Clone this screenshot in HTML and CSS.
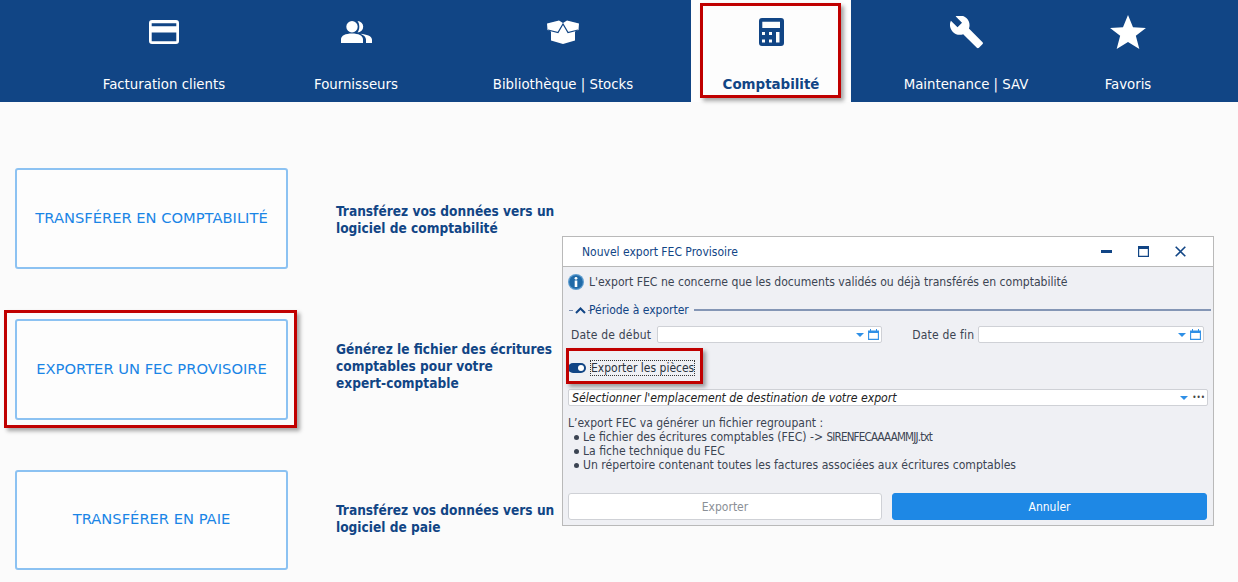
FILE: index.html
```html
<!DOCTYPE html>
<html lang="fr">
<head>
<meta charset="utf-8">
<title>Comptabilité</title>
<link rel="stylesheet" href="styles.css">
</head>
<body>
<nav class="nav">
  <a class="tab"><span class="tab-icon"><svg width="30" height="24" viewBox="0 0 30 24"><path fill="#fff" fill-rule="evenodd" d="M3 0h24a3 3 0 0 1 3 3v18a3 3 0 0 1-3 3H3a3 3 0 0 1-3-3V3a3 3 0 0 1 3-3zM2.700 3.300v3h24.600v-3zM2.700 12.500v8.800h24.600v-8.800z"/></svg></span><span class="tab-label">Facturation clients</span></a>
  <a class="tab"><span class="tab-icon"><svg width="31" height="22" viewBox="0 0 31 22"><path fill="#fff" d="M11 0a5.700 5.700 0 1 1 0 11.400A5.700 5.700 0 0 1 11 0zM0 22v-3.500C0 14.500 4.500 12.500 11 12.500s11 2 11 6V22zM16.500 0a5.700 5.700 0 0 1 0 11.400c1.200-1.600 1.800-3.400 1.800-5.700S17.700 1.600 16.500 0zM19.500 12.700c6 .5 11.500 2.300 11.500 6V22h-6v-3.500c0-2.300-2-4.300-5.500-5.800z"/></svg></span><span class="tab-label">Fournisseurs</span></a>
  <a class="tab"><span class="tab-icon"><svg width="32" height="24" viewBox="0 0 32 24"><path fill="#fff" d="M0 3.500 12 .5 16 3l4-2.500 12 3-.5 6.500-3.500 1.500v9L16 24 4 20.500v-9L.5 10z"/><path fill="none" stroke="#114585" stroke-width="1.200" d="m1 10 10 2.500L16 4l5 8.500L31 10"/></svg></span><span class="tab-label">Bibliothèque | Stocks</span></a>
  <a class="tab tab-active"><span class="tab-icon"><svg width="25" height="28" viewBox="0 0 25 28"><path fill="#114585" fill-rule="evenodd" d="M3 0h19a3 3 0 0 1 3 3v22a3 3 0 0 1-3 3H3a3 3 0 0 1-3-3V3a3 3 0 0 1 3-3zM3.300 3.700V10H21V3.700zM3 14v3h3v-3zM10 14v3h3v-3zM17 14v10.500h3.500V14zM3 21.500v3h3v-3zM10 21.500v3h3v-3z"/></svg></span><span class="tab-label">Comptabilité</span></a>
  <a class="tab"><span class="tab-icon"><svg width="33" height="33" viewBox="1 1.500 22 22"><path fill="#fff" d="m22.700 19-9.100-9.100c.9-2.300.4-5-1.500-6.900-2-2-5-2.400-7.400-1.300L9 6 6 9 1.600 4.700C.4 7.100.9 10.100 2.900 12.100c1.900 1.900 4.600 2.400 6.900 1.500l9.100 9.100c.4.400 1 .4 1.400 0l2.300-2.300c.5-.4.5-1.100.1-1.400z"/></svg></span><span class="tab-label">Maintenance | SAV</span></a>
  <a class="tab"><span class="tab-icon"><svg width="36" height="34" viewBox="0 0 38 36"><path fill="#fff" d="m19 0 5.300 13L38 13.700 27.300 22 31 36l-12-7.500L7 36l3.700-14L0 13.700 13.700 13z"/></svg></span><span class="tab-label">Favoris</span></a>
</nav>

<main class="main">
  <section class="row">
    <button class="card">TRANSFÉRER EN COMPTABILITÉ</button>
    <p class="desc desc-first">Transférez vos données vers un logiciel de comptabilité</p>
  </section>
  <section class="row">
    <button class="card">EXPORTER UN FEC PROVISOIRE</button>
    <p class="desc desc-mid">Générez le fichier des écritures comptables pour votre <span class="nowrap">expert-comptable</span></p>
  </section>
  <section class="row">
    <button class="card card-last">TRANSFÉRER EN PAIE</button>
    <p class="desc desc-last">Transférez vos données vers un logiciel de paie</p>
  </section>
</main>

<div class="mark mark-tab"></div>
<div class="mark mark-card"></div>

<section class="dialog">
  <header class="dialog-head">
    <span class="dialog-title">Nouvel export FEC Provisoire</span>
    <span class="win-btns">
      <svg width="11" height="11" viewBox="0 0 11 11"><rect y="4" width="11" height="3" fill="#114585"/></svg>
      <svg width="11" height="11" viewBox="0 0 11 11"><path fill="none" stroke="#114585" stroke-width="1.200" d="M.6 1h9.800v9.400H.6z"/><rect width="11" height="3" fill="#114585"/></svg>
      <svg width="11" height="11" viewBox="0 0 11 11"><path fill="none" stroke="#114585" stroke-width="1.600" d="m.7.700 9.600 9.600M10.300.7.700 10.300"/></svg>
    </span>
  </header>
  <div class="dialog-body">
    <div class="info">
      <svg width="16" height="16" viewBox="0 0 16 16"><circle cx="8" cy="8" r="8" fill="#5d9ccf"/><circle cx="8" cy="8" r="6.800" fill="#1f6aa8"/><rect x="6.700" y="6.500" width="2.600" height="6.500" fill="#fff"/><circle cx="8" cy="4.300" r="1.400" fill="#fff"/></svg>
      <span class="info-text">L'export FEC ne concerne que les documents validés ou déjà transférés en comptabilité</span>
    </div>
    <div class="legend">
      <span class="dash"></span>
      <svg width="11" height="7" viewBox="0 0 11 7"><path fill="none" stroke="#114585" stroke-width="2" d="m1 6 4.500-4.500L10 6"/></svg>
      <span class="dash"></span>
      <span class="legend-text">Période à exporter</span>
      <span class="legend-line"></span>
    </div>
    <div class="dates">
      <label class="date-label">Date de début</label>
      <div class="field field-start">
        <span class="caret"></span>
        <svg width="11" height="11" viewBox="0 0 11 11"><path fill="none" stroke="#2e8fe6" stroke-width="1.100" d="M.6 2h9.800v8.400H.6z"/><path stroke="#2e8fe6" stroke-width="2" d="M.6 3h9.800"/><path stroke="#2e8fe6" d="M2.500 0v2M8.500 0v2"/></svg>
      </div>
      <label class="date-label">Date de fin</label>
      <div class="field field-end">
        <span class="caret"></span>
        <svg width="11" height="11" viewBox="0 0 11 11"><path fill="none" stroke="#2e8fe6" stroke-width="1.100" d="M.6 2h9.800v8.400H.6z"/><path stroke="#2e8fe6" stroke-width="2" d="M.6 3h9.800"/><path stroke="#2e8fe6" d="M2.500 0v2M8.500 0v2"/></svg>
      </div>
    </div>
    <div class="toggle-row">
      <span class="toggle"><span class="knob"></span></span>
      <span class="toggle-label">Exporter les pièces</span>
      <div class="mark mark-toggle"></div>
    </div>
    <div class="field field-path">
      <em>Sélectionner l'emplacement de destination de votre export</em>
      <span class="caret"></span>
      <span class="more">•••</span>
    </div>
    <div class="notes">
      <p>L’export FEC va générer un fichier regroupant :</p>
      <ul>
        <li>Le fichier des écritures comptables (FEC) -&gt; <span class="filename">SIRENFECAAAAMMJJ.txt</span></li>
        <li>La fiche technique du FEC</li>
        <li>Un répertoire contenant toutes les factures associées aux écritures comptables</li>
      </ul>
    </div>
    <div class="actions">
      <button class="btn btn-off">Exporter</button>
      <button class="btn btn-main">Annuler</button>
    </div>
  </div>
</section>
</body>
</html>
```
FILE: styles.css
```css
* { box-sizing: border-box; }
html, body { margin: 0; height: 100%; overflow: hidden; }
body {
  position: relative;
  background: #fbfbfb;
  font-family: "DejaVu Sans Condensed", "DejaVu Sans", sans-serif;
  color: #3b4452;
}
p { margin: 0; }

.nav {
  display: grid;
  grid-template-columns: 226px 158px 256px 160px 230px 94px;
  height: 102px;
  padding-left: 51px;
  background: #114585;
}
.tab {
  display: flex;
  flex-direction: column;
  align-items: center;
  color: #fff;
  font-size: 14.8px;
}
.tab-icon {
  display: flex;
  align-items: center;
  justify-content: center;
  height: 75px;
  padding-bottom: 11px;
}
.tab-label { line-height: 18px; }
.tab-active { background: #fdfdfd; color: #114585; font-weight: 700; font-size: 14.9px; }

.main {
  display: flex;
  flex-direction: column;
  gap: 50px;
  padding: 66px 0 0 15px;
}
.row { display: flex; align-items: center; gap: 48px; }
.card {
  width: 273px;
  height: 101px;
  border: 2px solid #8cc2f2;
  border-radius: 3px;
  background: #fdfdfd;
  color: #1a85e6;
  font-family: "DejaVu Sans", sans-serif;
  font-size: 14.7px;
  padding: 0 0 2px;
}
.card-last { height: 100px; padding-bottom: 4px; }
.desc {
  width: 225px;
  color: #114585;
  font-size: 13.6px;
  font-weight: 700;
  line-height: 17px;
}
.desc-first { margin-top: 2px; }
.desc-mid { margin-bottom: 7px; }
.desc-last { margin-bottom: 3px; }
.nowrap { white-space: nowrap; }

.mark {
  position: absolute;
  border: 3px solid #c00000;
  box-shadow: 3px 3px 4px rgba(0, 0, 0, .35);
  pointer-events: none;
}
.mark-tab { left: 700px; top: 3px; width: 141px; height: 95px; }
.mark-card { left: 4px; top: 310px; width: 293px; height: 118px; }

.dialog {
  position: absolute;
  left: 562px;
  top: 236px;
  width: 652px;
  height: 290px;
  border: 1px solid #b9b9b9;
  background: #eff0f4;
  font-size: 12px;
}
.dialog-head {
  display: flex;
  align-items: center;
  justify-content: space-between;
  height: 30px;
  padding: 0 27px 0 19px;
  background: #fff;
  border-bottom: 1px solid #b9b9b9;
  color: #114585;
}
.win-btns { display: flex; gap: 26px; }
.dialog-body {
  display: flex;
  flex-direction: column;
  padding: 7px 2px 0 5px;
}
.info { display: flex; align-items: center; gap: 5px; height: 16px; }
.info-text { font-size: 12.1px; }
.legend {
  display: flex;
  align-items: center;
  gap: 2px;
  height: 16px;
  margin-top: 12px;
  margin-left: 1px;
  color: #114585;
}
.dash { width: 4px; height: 1px; background: #7a8fb0; }
.legend-text { margin: 0 3px 0 -5px; }
.legend-line { flex: 1; height: 2px; background: #8496b5; }
.dates { display: flex; align-items: center; margin-top: 8px; height: 17px; padding-left: 3px; }
.date-label { flex: none; letter-spacing: .2px; }
.field {
  display: flex;
  align-items: center;
  justify-content: flex-end;
  gap: 4px;
  height: 17px;
  border: 1px solid #cfd1d6;
  border-radius: 2px;
  background: #fff;
  padding-right: 2px;
}
.field-start { width: 225px; margin-left: 6px; margin-right: 30px; }
.field-end { width: 226px; margin-left: 4px; }
.caret {
  flex: none;
  width: 0;
  height: 0;
  border-left: 4px solid transparent;
  border-right: 4px solid transparent;
  border-top: 4px solid #2e8fe6;
}
.toggle-row { position: relative; display: flex; align-items: center; gap: 4px; height: 16px; margin-top: 17px; }
.mark-toggle { left: -2px; top: -12px; width: 137px; height: 36px; }
.toggle {
  display: flex;
  align-items: center;
  justify-content: flex-end;
  width: 18px;
  height: 10px;
  border-radius: 5px;
  background: #114585;
  padding-right: 2px;
}
.knob { width: 6px; height: 6px; border-radius: 50%; background: #fff; }
.toggle-label { height: 16px; border: 1px dotted #333; line-height: 14px; color: #2b3440; white-space: nowrap; }
.field-path { justify-content: flex-start; width: 640px; margin-top: 13px; padding: 0 2px 0 3px; color: #222; white-space: nowrap; }
.field-path em { flex: 1; font-size: 12.2px; }
.more { font-size: 8px; color: #444; }
.notes { margin-top: 10px; line-height: 14px; }
.notes ul { margin: 0; padding: 0 0 0 15px; list-style: none; }
.notes li { position: relative; font-size: 12.1px; }
.notes li::before {
  content: "";
  position: absolute;
  left: -9px;
  top: 5px;
  width: 5px;
  height: 5px;
  border-radius: 50%;
  background: #3b4452;
}
.filename { font-size: 11.5px; letter-spacing: -.8px; }
.actions { display: flex; gap: 10px; margin-top: 21px; }
.btn {
  height: 27px;
  padding: 0;
  border-radius: 3px;
  font: inherit;
}
.btn-off { width: 314px; background: #fff; border: 1px solid #cfd1d6; color: #8a8f96; }
.btn-main { width: 315px; background: #1e88e5; border: 1px solid #1e88e5; color: #fff; }
```
